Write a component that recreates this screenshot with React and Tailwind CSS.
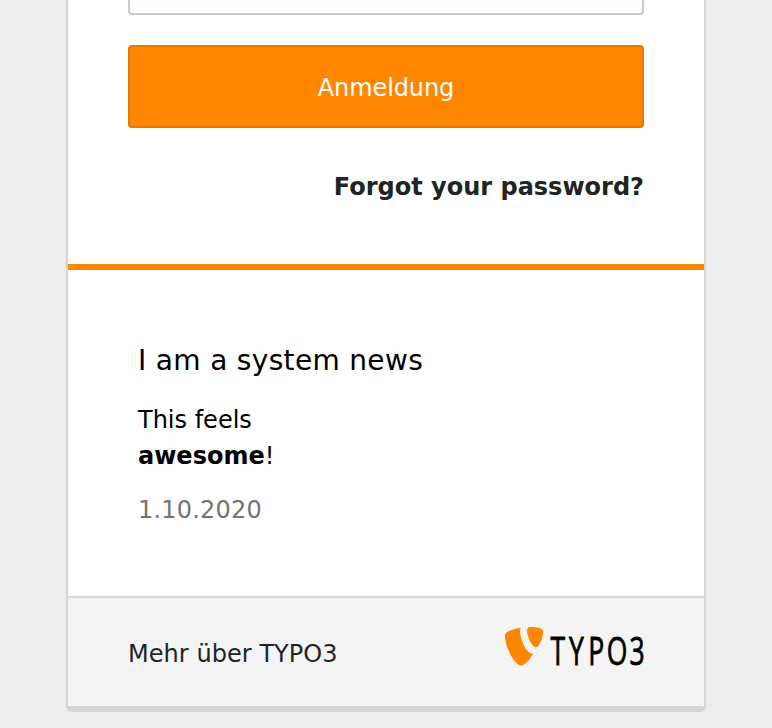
function Typo3Logo() {
  return (
    <svg width="140" height="40" viewBox="504 626 140 40" role="img" aria-label="TYPO3" className="block overflow-visible">
      <g fill="#ff8700">
        <path d="M533 653.2c-.6.2-1.100.2-1.700.2-5.100 0-11.300-15.500-11.300-21.800 0-2.300.5-3.100 1.200-3.800-6.300.8-13 2.800-15.400 5.500-.6.8-.8 1.900-.8 3.400 0 9.700 9.600 28.800 16 28.800 3.300 0 9.700-6 12-12.300z" />
        <path d="M530.300 627c6.500 0 12.800 1 12.800 4.700 0 7.500-4.700 15.500-7.100 15.500-4.300 0-8.900-10.900-8.900-16.300 0-2.500 1-3.900 3.200-3.900z" />
      </g>
      <text
        transform="translate(550.500 664.800) scale(.68 1)"
        x="0 27.2 55.400 82.600 116"
        y="0"
        fontSize="39"
        fill="#000"
        stroke="#000"
        strokeWidth=".8"
        className="font-['Open_Sans',sans-serif]"
      >
        TYPO3
      </text>
    </svg>
  );
}

export default function App() {
  return (
    <div className="h-[728px] overflow-hidden bg-[#ededed] font-['DejaVu_Sans',sans-serif] text-[24px] leading-[36px] text-black">
      <main className="mx-auto flex h-[712px] w-[640px] flex-col rounded-b-[6px] border-x-2 border-b-[6px] border-[#d4d4d4] bg-white">
        <section className="flex h-[264px] shrink-0 flex-col px-[60px]">
          <div className="h-[15px] shrink-0 rounded-b-[4px] border-2 border-t-0 border-[#c9c9c9] bg-[#fefefe]" />
          <button className="mt-[30px] h-[83px] shrink-0 rounded-[4px] border-2 border-[#e67a00] bg-[#ff8700] pt-[3px] tracking-[-0.1px] text-white">
            Anmeldung
          </button>
          <a className="mt-[41px] self-end whitespace-nowrap font-bold text-[#212424]">Forgot your password?</a>
        </section>
        <section className="flex grow flex-col border-t-[6px] border-[#ff8700] px-[70px] pt-[71px]">
          <h2 className="text-[28px] leading-[40px] tracking-[0.33px]">I am a system news</h2>
          <p className="mt-[21px]">
            This feels
            <br />
            <strong>awesome</strong>!
          </p>
          <time className="mt-[18px] tracking-[0.2px] text-[#737373]">1.10.2020</time>
        </section>
        <footer className="flex h-[110px] shrink-0 items-start justify-between rounded-b-[3px] border-t-2 border-[#d9d9d9] bg-[#f4f4f4] px-[60px]">
          <a className="mt-[38px] tracking-[0.05px] text-[#212424]">Mehr über TYPO3</a>
          <div className="mt-[28px]">
            <Typo3Logo />
          </div>
        </footer>
      </main>
    </div>
  );
}
